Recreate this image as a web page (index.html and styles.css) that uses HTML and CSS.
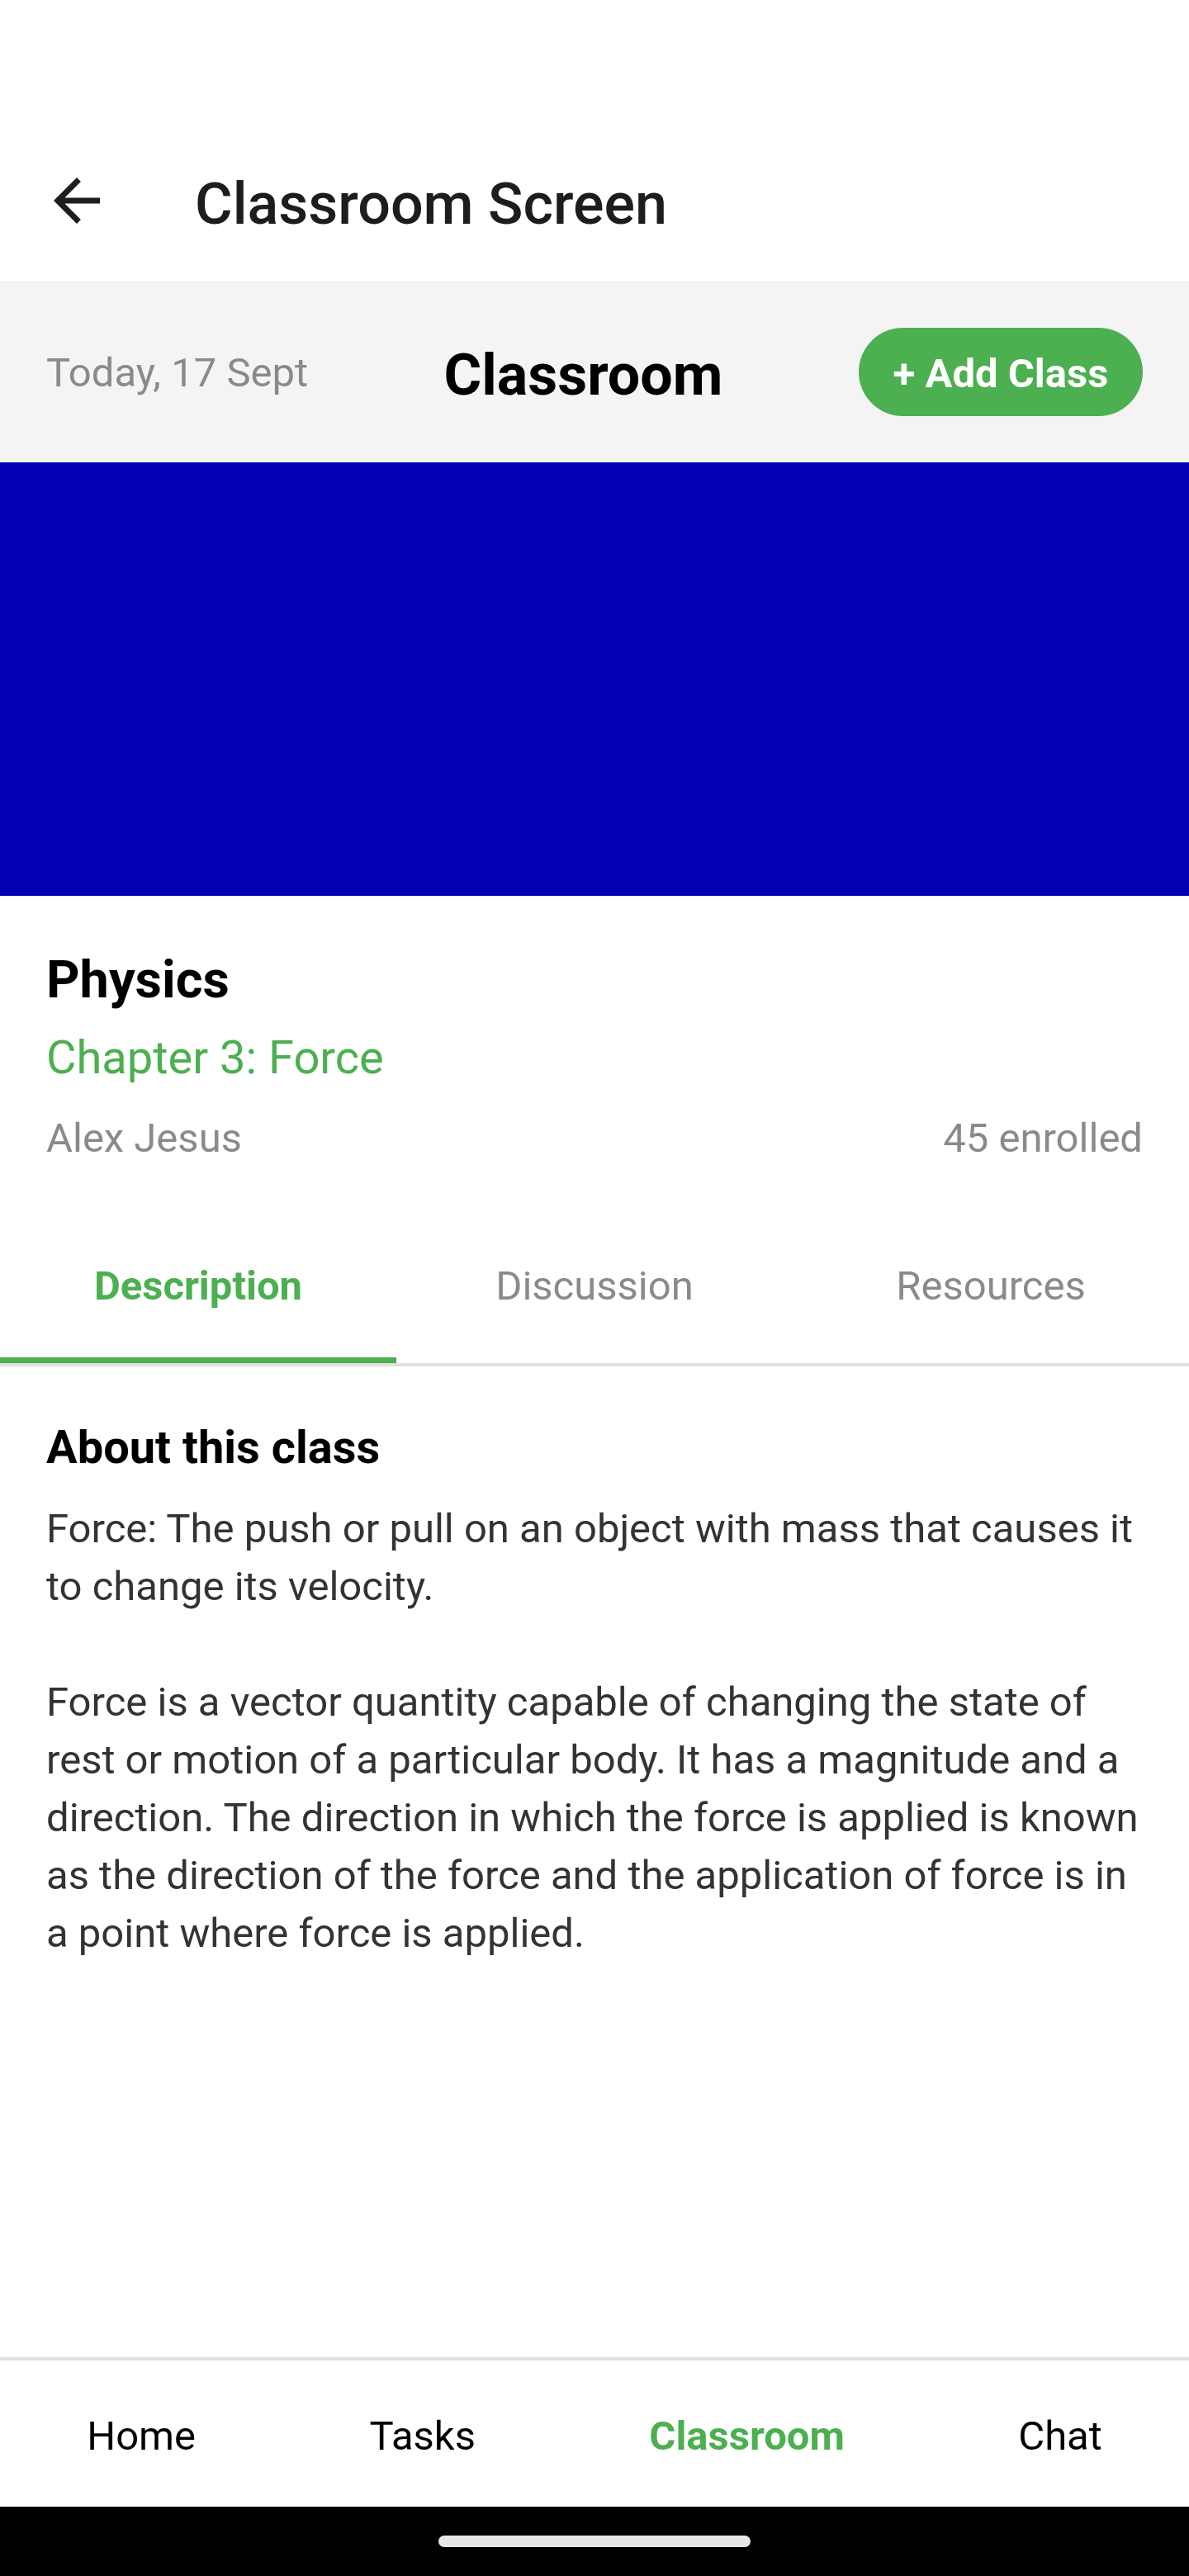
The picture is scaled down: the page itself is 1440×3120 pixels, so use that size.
FILE: index.html
```html
<!DOCTYPE html>
<html lang="en">
<head>
<meta charset="utf-8">
<title>Classroom Screen</title>
<link rel="stylesheet" href="styles.css">
</head>
<body>
<div class="screen">
  <div class="content">
    <header class="toolbar">
      <svg class="back-icon" viewBox="0 0 24 24" width="84" height="84" aria-hidden="true">
        <path d="M20 11H7.83l5.59-5.59L12 4l-8 8 8 8 1.41-1.41L7.83 13H20v-2z"/>
      </svg>
      <h1 class="toolbar-title">Classroom Screen</h1>
    </header>

    <section class="top-band">
      <span class="date">Today, 17 Sept</span>
      <span class="band-title">Classroom</span>
      <button class="add-btn">+ Add Class</button>
    </section>

    <div class="cover"></div>

    <section class="info">
      <h2 class="subject">Physics</h2>
      <div class="chapter">Chapter 3: Force</div>
      <div class="meta">
        <span>Alex Jesus</span>
        <span>45 enrolled</span>
      </div>
    </section>

    <nav class="tabs">
      <div class="tab active">Description</div>
      <div class="tab">Discussion</div>
      <div class="tab">Resources</div>
    </nav>
    <div class="tabs-divider"></div>

    <section class="about">
      <h3 class="about-title">About this class</h3>
      <p class="about-text">Force: The push or pull on an object with mass that causes it to change its velocity.</p>
      <p class="about-text gap">Force is a vector quantity capable of changing the state of rest or motion of a particular body. It has a magnitude and a direction. The direction in which the force is applied is known as the direction of the force and the application of force is in a point where force is applied.</p>
    </section>
  </div>

  <footer class="bottom-nav">
    <span class="nav-item">Home</span>
    <span class="nav-item">Tasks</span>
    <span class="nav-item active">Classroom</span>
    <span class="nav-item">Chat</span>
  </footer>
  <div class="gesture-bar"><div class="gesture-pill"></div></div>
</div>
</body>
</html>
```

FILE: styles.css
```css
* { box-sizing: border-box; }

html, body {
  margin: 0;
  padding: 0;
  background: #ffffff;
}

body {
  font-family: Roboto, "Noto Sans", "Liberation Sans", sans-serif;
  color: #000;
}

.screen {
  width: 1440px;
  height: 3120px;
  display: flex;
  flex-direction: column;
  overflow: hidden;
}

.content {
  flex: 1;
  display: flex;
  flex-direction: column;
}

/* Toolbar */
.toolbar {
  height: 340px;
  display: flex;
  align-items: flex-start;
  padding: 201px 0 0 51px;
  background: #fff;
}

.back-icon {
  flex: none;
  fill: #1d1d1d;
}

.toolbar-title {
  margin: 5px 0 0 101px;
  font-size: 70px;
  line-height: 82px;
  font-weight: 500;
  color: #1d1d1d;
}

/* Gray band */
.top-band {
  height: 220px;
  background: #f4f4f4;
  padding: 0 56px;
  display: flex;
  align-items: center;
  justify-content: space-between;
}

.date {
  font-size: 49px;
  line-height: 57px;
  color: #8a8a8a;
  padding-top: 2px;
}

.band-title {
  font-size: 70px;
  line-height: 82px;
  font-weight: 700;
  color: #000;
  padding-top: 8px;
}

.add-btn {
  width: 344px;
  height: 107px;
  padding: 5px 0 0;
  border: none;
  border-radius: 54px;
  background: #4caf50;
  color: #fff;
  font-family: inherit;
  font-size: 49px;
  line-height: 102px;
  font-weight: 700;
  text-align: center;
}

/* Cover */
.cover {
  height: 525px;
  background: #0400b3;
}

/* Info */
.info {
  padding: 65px 56px 0;
}

.subject {
  margin: 0;
  font-size: 63px;
  line-height: 74px;
  font-weight: 700;
  color: #000;
}

.chapter {
  margin-top: 24px;
  font-size: 56px;
  line-height: 66px;
  color: #4caf50;
}

.meta {
  margin-top: 36px;
  display: flex;
  justify-content: space-between;
  font-size: 49px;
  line-height: 57px;
  color: #8a8a8a;
}

/* Tabs */
.tabs {
  margin-top: 76px;
  display: flex;
}

.tab {
  flex: 1;
  text-align: center;
  padding: 46px 0 58px;
  font-size: 49px;
  line-height: 57px;
  color: #8a8a8a;
  border-bottom: 7px solid transparent;
}

.tab.active {
  color: #4caf50;
  font-weight: 700;
  border-bottom-color: #4caf50;
}

.tabs-divider {
  height: 4px;
  background: #e0e0e0;
}

/* About */
.about {
  padding: 65px 56px 0;
}

.about-title {
  margin: 0;
  font-size: 56px;
  line-height: 66px;
  font-weight: 700;
  color: #000;
}

.about-text {
  margin: 31px 0 0;
  font-size: 49px;
  line-height: 70px;
  color: #333333;
}

.about-text.gap {
  margin-top: 70px;
}

/* Bottom nav */
.bottom-nav {
  flex: none;
  height: 181px;
  border-top: 4px solid #e0e0e0;
  padding-top: 6px;
  display: flex;
  align-items: center;
  justify-content: space-around;
  background: #fff;
}

.nav-item {
  font-size: 49px;
  line-height: 57px;
  color: #000;
}

.nav-item.active {
  color: #4caf50;
  font-weight: 700;
}

.gesture-bar {
  flex: none;
  height: 84px;
  background: #000;
  display: flex;
  justify-content: center;
  padding-top: 35px;
}

.gesture-pill {
  width: 378px;
  height: 14px;
  border-radius: 7px;
  background: #e8e8e8;
}
```
